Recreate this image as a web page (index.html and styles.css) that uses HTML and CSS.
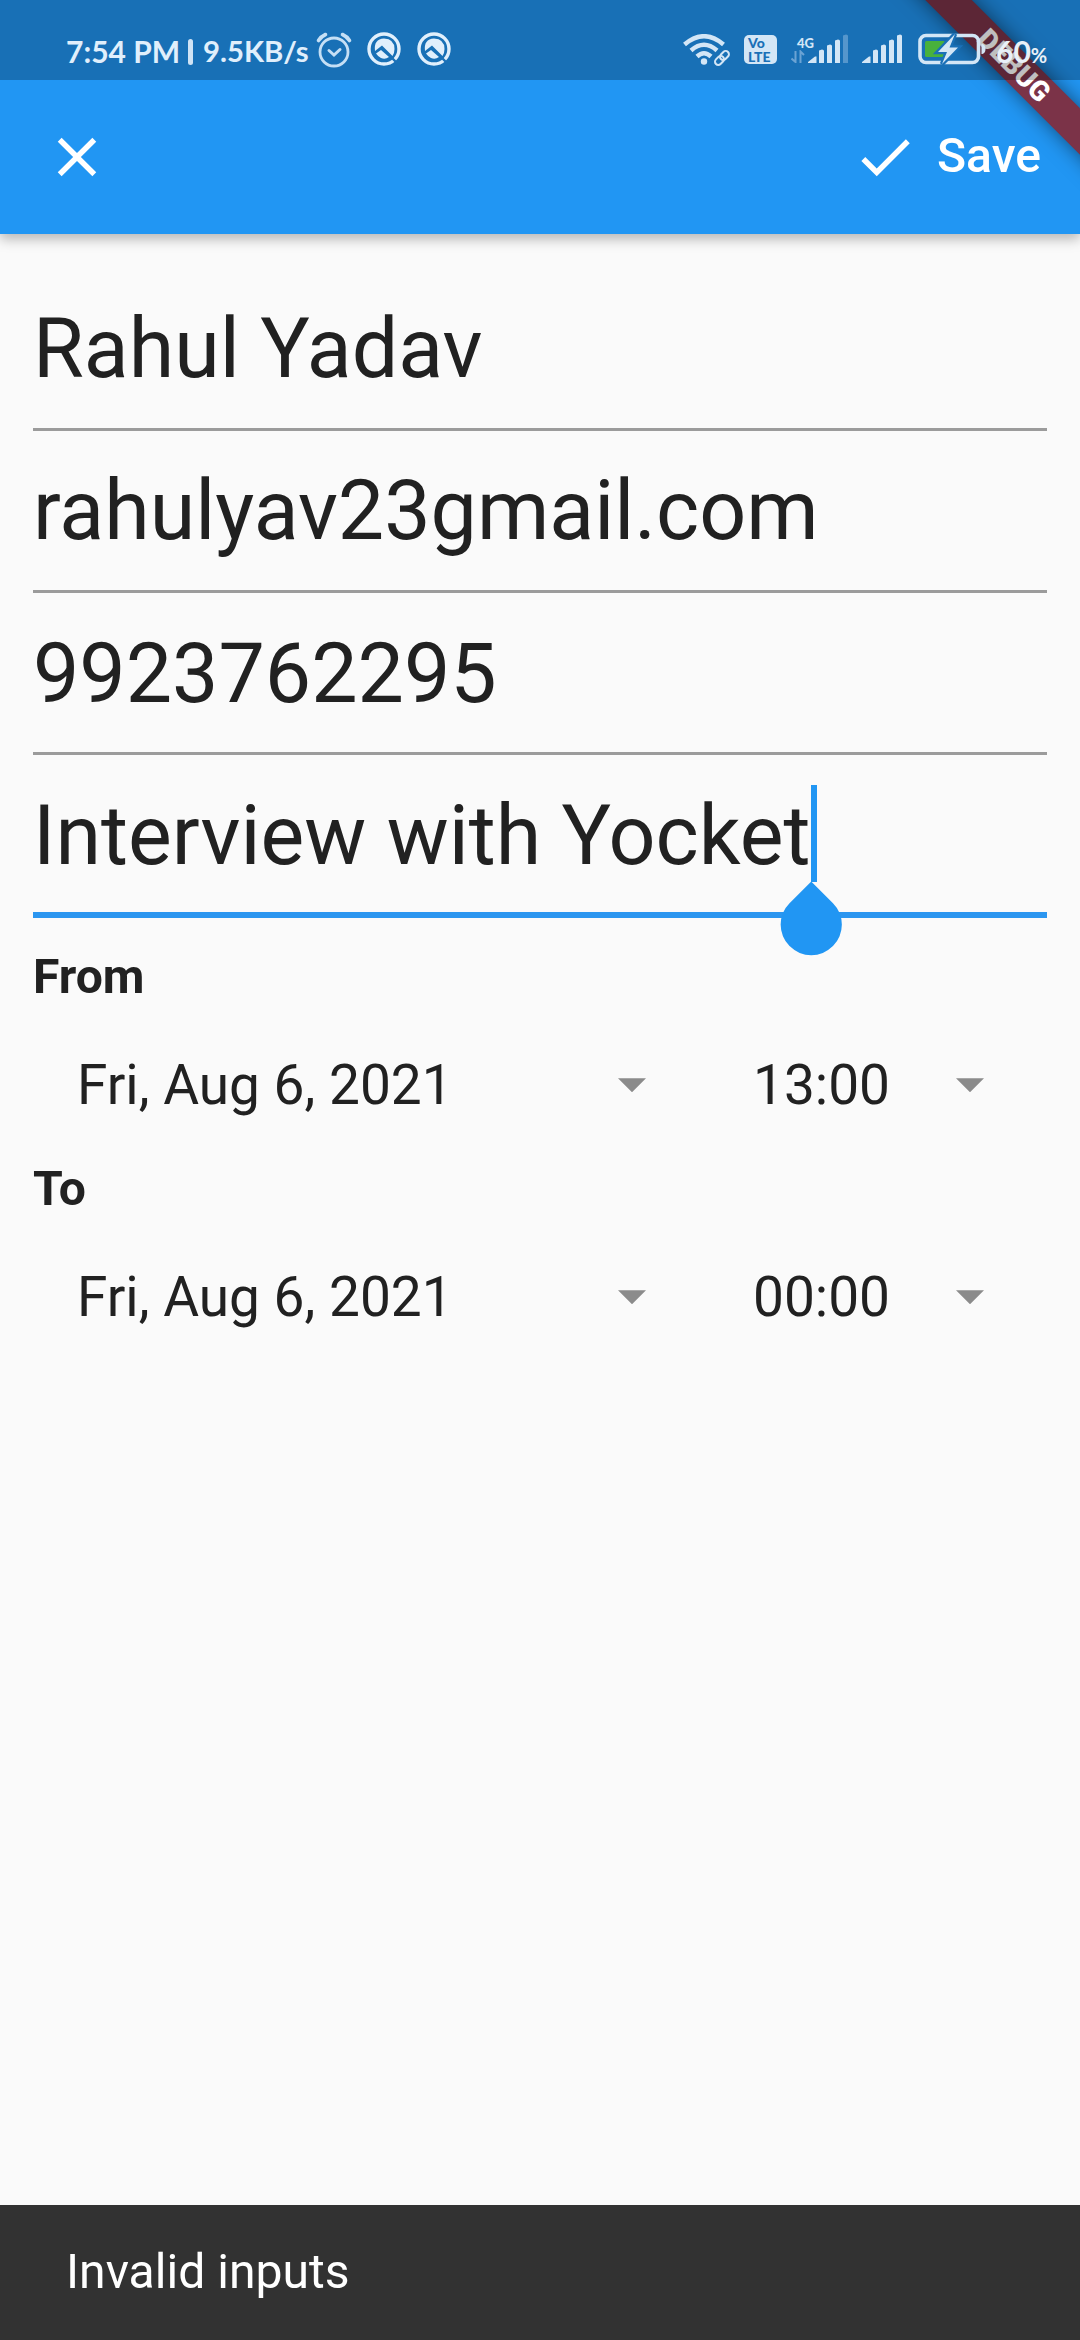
FILE: index.html
```html
<!DOCTYPE html>
<html lang="en">
<head>
<meta charset="utf-8">
<title>Edit event</title>
<link rel="stylesheet" href="styles.css">
</head>
<body>
<div class="screen">
  <header class="app-bar">
    <svg class="icon" viewBox="0 0 24 24"><path d="M19 6.41 17.59 5 12 10.59 6.41 5 5 6.41 10.59 12 5 17.59 6.41 19 12 13.41 17.59 19 19 17.59 13.41 12z"/></svg>
    <div class="save">
      <svg class="icon" viewBox="0 0 24 24"><path d="M9 16.17 4.83 12l-1.42 1.41L9 19 21 7l-1.41-1.41z"/></svg>
      <span>Save</span>
    </div>
  </header>

  <main class="form">
    <div class="field"><span>Rahul Yadav</span></div>
    <div class="field"><span>rahulyav23gmail.com</span></div>
    <div class="field"><span>9923762295</span></div>
    <div class="field focused"><span class="editing">Interview with Yocket<i class="caret"></i><i class="handle"></i></span></div>

    <section class="group">
      <h2>From</h2>
      <div class="pickers">
        <div class="picker date"><span>Fri, Aug 6, 2021</span><i class="arrow"></i></div>
        <div class="picker time"><span>13:00</span><i class="arrow"></i></div>
      </div>
    </section>
    <section class="group">
      <h2>To</h2>
      <div class="pickers">
        <div class="picker date"><span>Fri, Aug 6, 2021</span><i class="arrow"></i></div>
        <div class="picker time"><span>00:00</span><i class="arrow"></i></div>
      </div>
    </section>
  </main>

  <footer class="snackbar">Invalid inputs</footer>

  <div class="ribbon-clip"><div class="ribbon">DEBUG</div></div>

  <div class="status-bar">
    <div class="status-left">
      <span class="clock">7:54 PM</span><i class="divider"></i><span class="speed">9.5KB/s</span>
      <svg class="alarm" width="36" height="38" viewBox="0 0 36 38" fill="none" stroke="#c5dff5" stroke-width="2.8" stroke-linecap="round">
        <circle cx="18" cy="21" r="14"/><path d="M2.5 9.5Q5 5.5 9.5 3.5M26.5 3.5Q31 5.5 33.5 9.5" stroke-width="3.600"/><path d="M13 19.5l5 4.5 6-5.5" stroke-width="3"/>
      </svg>
      <svg class="badge" width="34" height="34" viewBox="0 0 34 34">
        <circle cx="17" cy="17" r="15" fill="none" stroke="#e0effc" stroke-width="3.4"/>
        <path d="M8 19Q6.500 7 17 6.500Q27.500 7 27.500 17Q27.500 21 25.500 24L15 13.500zM9 21.500L14 18L22 25Q18 28 14 26Q11 24.500 9 21.500z" fill="#e0effc"/>
        <path d="M24.500 25.500l6 6" stroke="#1a70b7" stroke-width="2.400"/>
      </svg>
      <svg class="badge" width="34" height="34" viewBox="0 0 34 34">
        <circle cx="17" cy="17" r="15" fill="none" stroke="#e0effc" stroke-width="3.4"/>
        <path d="M8 19Q6.500 7 17 6.500Q27.500 7 27.500 17Q27.500 21 25.500 24L15 13.500zM9 21.500L14 18L22 25Q18 28 14 26Q11 24.500 9 21.500z" fill="#e0effc"/>
        <path d="M24.500 25.500l6 6" stroke="#1a70b7" stroke-width="2.400"/>
      </svg>
    </div>
    <div class="status-right">
      <svg class="wifi" width="48" height="32" viewBox="0 0 48 32" fill="none" stroke="#d3e6f6">
        <path d="M1.5 10.5Q21 -6 40.500 10.500" stroke-width="4.500"/>
        <path d="M8 16.500Q21 5 34 16.500" stroke-width="4.500"/>
        <path d="M14 22.500Q21 16 28 22.500" stroke-width="4.500"/>
        <circle cx="21" cy="27.500" r="3.200" fill="#d3e6f6" stroke="none"/>
        <g transform="rotate(-45 39 24)" stroke-width="2"><rect x="30.500" y="20.700" width="10" height="6.500" rx="3.250"/><rect x="37.500" y="20.700" width="10" height="6.500" rx="3.250"/></g>
      </svg>
      <div class="volte"><span>Vo</span><span>LTE</span></div>
      <div class="mobile">
        <div class="net"><span>4G</span>
          <svg width="14" height="13" viewBox="0 0 14 13" fill="none" stroke="#6ba3d4" stroke-width="2"><path d="M0.500 8.500L4.500 12V1M9.500 13V1.500L13 5"/></svg>
        </div>
        <svg class="signal" width="41" height="30" viewBox="0 0 41 30" fill="#d3e6f6">
          <path d="M0 29V28L7 22.500H8.500V29zM11 16.500l3-1q2 0 2 1.500v12h-5zM19 11.500l3-1q2 0 2 1.500v17h-5zM27 6.500l3-1q2 0 2 1.500v22h-5z"/><path d="M35 1.500l3-1q2 0 2 1.500v27h-5z" fill="#5596cc"/>
        </svg>
      </div>
      <svg class="signal-two" width="41" height="30" viewBox="0 0 41 30" fill="#d3e6f6">
        <path d="M0 29V28L7 22.500H8.500V29zM11 16.500l3-1q2 0 2 1.500v12h-5zM19 11.500l3-1q2 0 2 1.500v17h-5zM27 6.500l3-1q2 0 2 1.500v22h-5zM35 1.500l3-1q2 0 2 1.500v27h-5z"/>
      </svg>
      <svg class="battery" width="69" height="32" viewBox="0 0 69 32">
        <rect x="2" y="2.500" width="58.500" height="27" rx="6" fill="none" stroke="#d3e6f6" stroke-width="3.600"/>
        <path d="M63.500 11h1q3 1 3 5t-3 5h-1z" fill="#d3e6f6"/>
        <rect x="7" y="8" width="20" height="16" rx="1.500" fill="#48b13c"/>
        <path d="M37 1L20 19H29L24 31L40 14.500H31.500z" fill="#d3e6f6" stroke="#1a70b7" stroke-width="4.500" paint-order="stroke"/>
      </svg>
      <span class="percent">60<small>%</small></span>
    </div>
  </div>
</div>
</body>
</html>
```
FILE: styles.css
```css
* { box-sizing: border-box; }
body { margin: 0; font-family: Roboto, "Liberation Sans", sans-serif; color: #212121; }
.screen {
  position: relative;
  width: 1080px;
  height: 2340px;
  overflow: hidden;
  background: #fafafa;
  display: flex;
  flex-direction: column;
}
i { display: block; }

.app-bar {
  height: 234px;
  padding: 80px 39px 0 44px;
  background: #2196f3;
  box-shadow: 0 5px 12px rgba(0, 0, 0, .28);
  display: flex;
  align-items: center;
  justify-content: space-between;
  color: #fff;
}
.icon { display: block; width: 66px; height: 66px; fill: currentColor; }
.save {
  display: flex;
  align-items: center;
  gap: 19px;
  font-size: 48.1px;
  line-height: 56px;
  font-weight: 500;
}
.save span { padding-bottom: 3px; }

.form { flex: 1; padding: 34.5px 33px 0; }
.field {
  height: 162.25px;
  padding-bottom: 30px;
  border-bottom: 3px solid #9b9b9b;
  display: flex;
  align-items: flex-end;
  font-size: 82.5px;
  line-height: 96.7px;
  white-space: nowrap;
}
.field.focused { height: 163px; border-bottom: 6px solid #2b96f0; padding-bottom: 28px; }
.editing { position: relative; }
.caret {
  position: absolute;
  right: -6px;
  bottom: 2px;
  width: 6px;
  height: 97px;
  background: #2196f3;
}
.handle {
  position: absolute;
  right: -31px;
  bottom: -70px;
  width: 60.5px;
  height: 60.5px;
  background: #2196f3;
  border-radius: 0 50% 50% 50%;
  transform: rotate(45deg);
}

.group { height: 212px; }
.field + .group { margin-top: 30.5px; }
.group h2 { margin: 0; font-size: 48.1px; line-height: 56px; font-weight: 700; }
.pickers { display: flex; height: 156px; padding: 5px 44px 0; }
.picker {
  display: flex;
  align-items: center;
  justify-content: space-between;
  font-size: 55px;
  line-height: 64px;
}
.date { width: 569px; margin-right: 107px; }
.time { width: 231px; }
.arrow { width: 28px; height: 14px; background: #8b8b8b; clip-path: polygon(0 0, 100% 0, 50% 100%); }

.snackbar {
  height: 135px;
  padding: 0 66px 3px;
  background: #323232;
  color: #fff;
  display: flex;
  align-items: center;
  font-size: 48.1px;
}

.ribbon-clip { position: absolute; top: 0; right: 0; width: 300px; height: 300px; overflow: hidden; }
.ribbon {
  position: absolute;
  left: 34px;
  top: 49px;
  width: 400px;
  height: 33px;
  line-height: 33px;
  background: #7b3348;
  box-shadow: 0 0 20px rgba(0, 0, 0, .5);
  transform: rotate(45deg);
  color: #fff;
  font-size: 28px;
  font-weight: 900;
  text-align: center;
}

.status-bar {
  position: absolute;
  inset: 0 0 auto 0;
  height: 80px;
  padding: 0 31px 0 66px;
  background: rgba(0, 0, 0, .25);
  display: flex;
  justify-content: space-between;
  color: #e0effc;
  font-family: Lato, "Open Sans", sans-serif;
  font-weight: 700;
}
.status-left, .status-right { display: flex; align-items: flex-start; }
.clock, .speed { margin-top: 32px; height: 38px; line-height: 38px; font-size: 30px; white-space: nowrap; }
.clock { width: 113px; }
.speed { width: 105px; font-size: 29.3px; }
.divider { width: 5px; height: 26px; margin: 39px 10px 0 9px; border-radius: 3px; background: #cfe3f5; }
.alarm { margin: 31px 0 0 8px; }
.badge { margin: 32px 0 0 15px; }
.badge + .badge { margin-left: 16px; }
.status-right { color: #d3e6f6; }
.wifi { margin-top: 34px; }
.volte {
  width: 33px;
  height: 29px;
  margin: 35px 0 0 13px;
  border-radius: 5px;
  background: #d3e6f6;
  color: #1a70b7;
  display: flex;
  flex-direction: column;
  padding: 1px 4px;
  font-size: 14px;
  line-height: 13.5px;
  font-weight: 900;
}
.mobile { display: flex; margin-left: 14px; }
.net { width: 17px; margin-top: 36px; font-size: 13px; line-height: 14px; font-weight: 900; }
.net span { display: block; margin-left: 6px; width: 18px; }
.net svg { display: block; }
.signal { margin-top: 34px; }
.signal-two { margin: 34px 0 0 13px; }
.battery { margin: 33px 0 0 15px; }
.percent { width: 53px; margin: 32px 0 0 9px; font-size: 30px; line-height: 38px; white-space: nowrap; color: #e9f1f8; }
.percent small { font-size: 20px; }
```
